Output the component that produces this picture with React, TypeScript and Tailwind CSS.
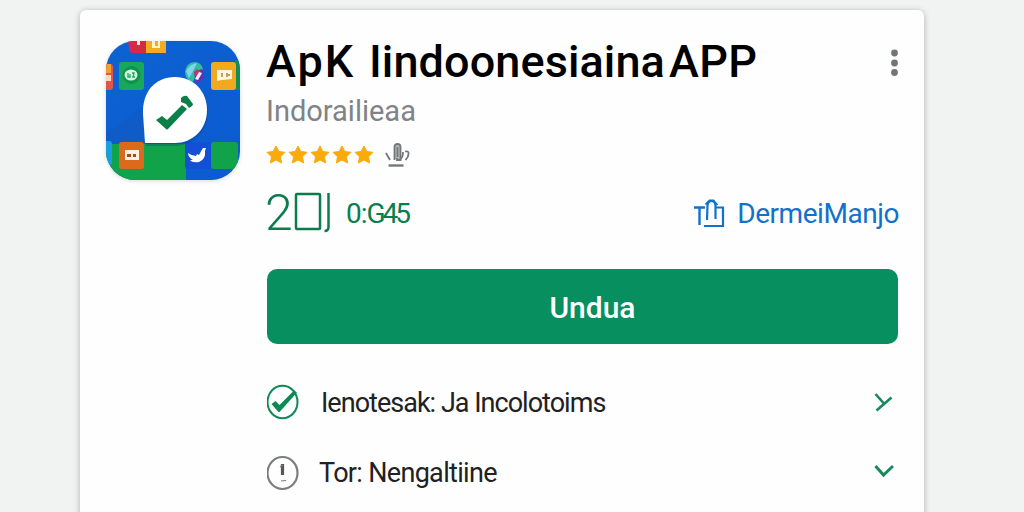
import React from 'react'
import clsx from 'clsx'

const STARS = [0, 1, 2, 3, 4]

function AppIcon() {
  return (
    <svg className="block drop-shadow-sm" width="134" height="139" viewBox="0 0 134 139">
      <defs>
        <clipPath id="tile">
          <rect width="134" height="139" rx="29" />
        </clipPath>
        <linearGradient id="sky" x1="0" y1="0" x2="1" y2="1">
          <stop offset="0" stopColor="#0d62d2" />
          <stop offset="1" stopColor="#0a5bd0" />
        </linearGradient>
      </defs>
      <g clipPath="url(#tile)">
        <rect width="134" height="139" fill="url(#sky)" />
        <path d="M0 92L38 66V104H0z" fill="#1556b8" opacity="0.4" />
        {/* top tiles */}
        <path d="M22 0h18v12H27q-4 0-4-5z" fill="#d32a49" />
        <path d="M40 0h20v12H40z" fill="#f0ad24" />
        <path d="M31 0h3v4h-3zM46 0h3v5h3V0h2v7H46z" fill="#fff1cf" />
        {/* left column */}
        <rect x="-8" y="23" width="15" height="26" rx="3" fill="#e2554a" />
        <path d="M0 23h5v9H0z" fill="#f4a02b" />
        <path d="M0 34h5v6H0z" fill="#f9d9bd" />
        <rect x="13" y="21" width="25" height="28" rx="3" fill="#18a85b" />
        <circle cx="25.500" cy="34" r="9" fill="#0f9150" />
        <ellipse cx="25" cy="34" rx="6.500" ry="5.500" fill="#d5f5e1" />
        <path d="M22 32v4h2v-3m2-1h2l-1 4h2" stroke="#18a85b" strokeWidth="1.3" fill="none" />
        {/* right column */}
        <path d="M79 31q1-9 9-10 8 0 9 8l-6 2-4 10q-8-2-8-10z" fill="#35bba0" />
        <path d="M80 30q4-7 11-8l-5 10-3 5z" fill="#7fd4ee" />
        <path d="M88 31l8-3q4 5 1 11l-7 4z" fill="#5a35b8" />
        <path d="M88 31l3-3 4 3-5 5z" fill="#c9326a" />
        <path d="M93 31l3 1-4 7-3-1z" fill="#f3f0ff" />
        <path d="M129 19h8v30h-8z" fill="#148c5a" />
        <rect x="105" y="21" width="25" height="28" rx="3" fill="#f2a922" />
        <path d="M111 29h15v9l-10 1-5 1z" fill="#fff7df" />
        <path d="M116 32v4m5-4v4m1-2h2" stroke="#a77a28" strokeWidth="1.4" />
        {/* ground */}
        <path d="M0 103h80v36H0z" fill="#10a34a" />
        <rect x="-6" y="100" width="12" height="24" rx="3" fill="#199fe0" />
        <rect x="13" y="101" width="25" height="27" rx="3" fill="#dd6a1c" />
        <path d="M19 109h14v10H19z" fill="#fff0e2" />
        <path d="M21 113h4v3h-4zm6 0h3v3h-3z" fill="#a44a1c" />
        <rect x="79" y="101" width="26" height="27" rx="3" fill="#144fd8" />
        <path d="M82 112q4 3 8 3l1-2 2 1q2-4 4-7l3 0-1 3q1 8-6 11-7 1-9-2l3 0q-5-3-5-7z" fill="#fff" />
        <rect x="105" y="101" width="27" height="27" rx="3" fill="#10a34a" />
        {/* speech bubble */}
        <path
          d="M39 103L37 73C36 51 49 37 69 37C88 37 101 51 101 69C101 89 86 102 69 103Z"
          fill="#083a83"
          opacity="0.3"
          transform="translate(1 2)"
        />
        <path d="M39 102L37 73C36 51 49 36 69 36C88 36 101 51 101 69C101 89 86 102 69 102Z" fill="#fff" />
        <path d="M50 79l6-4 5 4L76 64l5 4-19 20q-1 1-2 0z" fill="#0a8048" />
        <path d="M75 57q3-3 6-2l6 8q0 2-4 4l-3-4-5-2z" fill="#0a8048" />
      </g>
    </svg>
  )
}

function Star() {
  return (
    <svg width="20" height="20" viewBox="0 0 20 20" fill="#f9ab0c">
      <path
        d="M10 1l2.8 5.500 6.200.8-4.500 4.500 1.1 6.200-5.600-3-5.600 3 1.100-6.200-4.500-4.500 6.200-.8z"
        stroke="#f9ab0c"
        strokeWidth="1"
        strokeLinejoin="round"
      />
    </svg>
  )
}

function HandIcon() {
  return (
    <svg width="26" height="26" viewBox="0 0 26 26" fill="none" stroke="#74777a" strokeWidth="1.8">
      <path d="M1 11l4 7" />
      <path d="M9.500 18V5q0-3 3-3t3 3v13H12v-2" fill="#b6b8ba" />
      <path d="M12.500 5v10M15.500 17q2.500-2 2.500-7M20 9.500q4-1 3.500 2.500 0 3-3 6" />
      <path d="M3.500 23.500h15" strokeWidth="2.4" />
    </svg>
  )
}

function ShareIcon() {
  return (
    <svg width="32" height="32" viewBox="0 0 32 32" fill="none" stroke="#1271cb" strokeWidth="2.2">
      <path d="M1 9.500h11M6.500 10v17" strokeWidth="2.4" />
      <path d="M14 22l.5-15q1-4 4-4t4 4v14" />
      <path d="M12.500 6.500l4-4h4l4 4.500" strokeWidth="1.8" />
      <path d="M23 9.500h7V28H11" />
    </svg>
  )
}

type RowProps = {
  icon: React.ReactNode
  arrow: React.ReactNode
  className?: string
  children: React.ReactNode
}

function InfoRow({ icon, arrow, className, children }: RowProps) {
  return (
    <div className="flex h-[70.5px] items-center">
      <div className="w-[33px] shrink-0">{icon}</div>
      <div className={clsx('grow whitespace-pre pt-px text-[27px] leading-9 text-[#202124]', className)}>{children}</div>
      <div className="mr-1 shrink-0">{arrow}</div>
    </div>
  )
}

export default function App() {
  return (
    <div className="flex h-[512px] w-[1024px] overflow-hidden bg-[#f1f2f2] pl-20 pt-2.5 font-[Roboto,sans-serif]">
      <div className="flex h-[520px] w-[844px] shrink-0 rounded-md bg-[#fefefe] pl-[26px] pt-7 shadow-[0_1px_6px_rgba(0,0,0,0.28)]">
        <div className="w-[161px] shrink-0 pt-[3px]">
          <AppIcon />
        </div>

        <div className="w-[631px] shrink-0">
          <div className="flex h-12 justify-between">
            <h1 className="-ml-px flex whitespace-nowrap text-[45px] font-medium leading-[48px] text-black">
              <span className="w-[103px] shrink-0 tracking-[2px]">ApK</span>
              <span className="w-[300px] shrink-0 tracking-[0.1px]">Iindoonesiaina</span>
              <span className="tracking-[0.3px]">APP</span>
            </h1>
            <svg className="mt-[11px]" width="8" height="28" viewBox="0 0 8 28" fill="#727577">
              <circle cx="4.500" cy="4" r="3.4" />
              <circle cx="4.500" cy="14" r="3.4" />
              <circle cx="4.500" cy="23.500" r="3.4" />
            </svg>
          </div>

          <div className="-ml-px mt-[7px] h-9 text-[29px] leading-9 text-[#808386]">Indorailieaa</div>

          <div className="-ml-px mt-3.5 flex h-6 items-center gap-0.5">
            {STARS.map(i => <Star key={i} />)}
            <div className="ml-[9px]">
              <HandIcon />
            </div>
          </div>

          <div className="mt-[18px] flex h-14 items-center text-[#0b7d4d]">
            <span className="-ml-0.5 w-7 text-[50px] font-light leading-[56px]">2</span>
            <svg width="38" height="42" viewBox="0 0 38 42" fill="none" stroke="#0b7d4d" strokeWidth="2.500">
              <rect x="3" y="2" width="24" height="35" rx="1" />
              <path d="M35.500 1v34q0 4-4 4" />
            </svg>
            <span className="ml-[15px] pt-0.5 text-[28px] leading-9 tracking-[-3px]">
              <span className="tracking-[-1px]">0:</span>G45
            </span>
            <div className="ml-auto flex items-center pt-0.5 text-[28px] leading-9 text-[#1271cb]">
              <ShareIcon />
              <span className="ml-3 mr-[-1px] tracking-[-0.45px]">DermeiManjo</span>
            </div>
          </div>

          <button className="mt-7 block h-[75px] w-full rounded-[10px] bg-[#078f60] pl-5 pt-0.5 text-[30px] font-medium leading-9 text-white">
            Undua
          </button>

          <div className="mt-[23px]">
            <InfoRow
              className="pl-[21px] tracking-[-0.98px]"
              icon={
                <svg width="34" height="36" viewBox="0 0 34 36">
                  <ellipse cx="15.500" cy="18" rx="15" ry="16.300" fill="none" stroke="#0b8a55" strokeWidth="2" />
                  <path d="M4.500 20l4-3 4 4L27 6.500l3 2-17 19q-1 1-2 0z" fill="#0b8a55" />
                </svg>
              }
              arrow={
                <svg width="20" height="22" viewBox="0 0 20 22" fill="none" stroke="#158a5b" strokeWidth="2.6">
                  <path d="M1.500 3l8 9M2.500 19.500L17.500 6.500" />
                </svg>
              }
            >
              Ienotesak: Ja Incolotoims
            </InfoRow>
            <InfoRow
              className="pl-[19px] tracking-[-0.68px]"
              icon={
                <svg width="34" height="36" viewBox="0 0 34 36" fill="none">
                  <ellipse cx="15.500" cy="18" rx="15" ry="16" stroke="#7b7e80" strokeWidth="2.2" />
                  <path d="M15.500 9v11" stroke="#55585a" strokeWidth="3.2" />
                  <path d="M13 12l3-2M14 26l5-.5" stroke="#777a7c" strokeWidth="1.2" />
                </svg>
              }
              arrow={
                <svg className="relative -top-0.5" width="20" height="14" viewBox="0 0 20 14" fill="none" stroke="#158a5b" strokeWidth="3">
                  <path d="M1.500 2l8 9L19 2" />
                </svg>
              }
            >
              Tor: Nengaltiine
            </InfoRow>
          </div>
        </div>
      </div>
    </div>
  )
}
